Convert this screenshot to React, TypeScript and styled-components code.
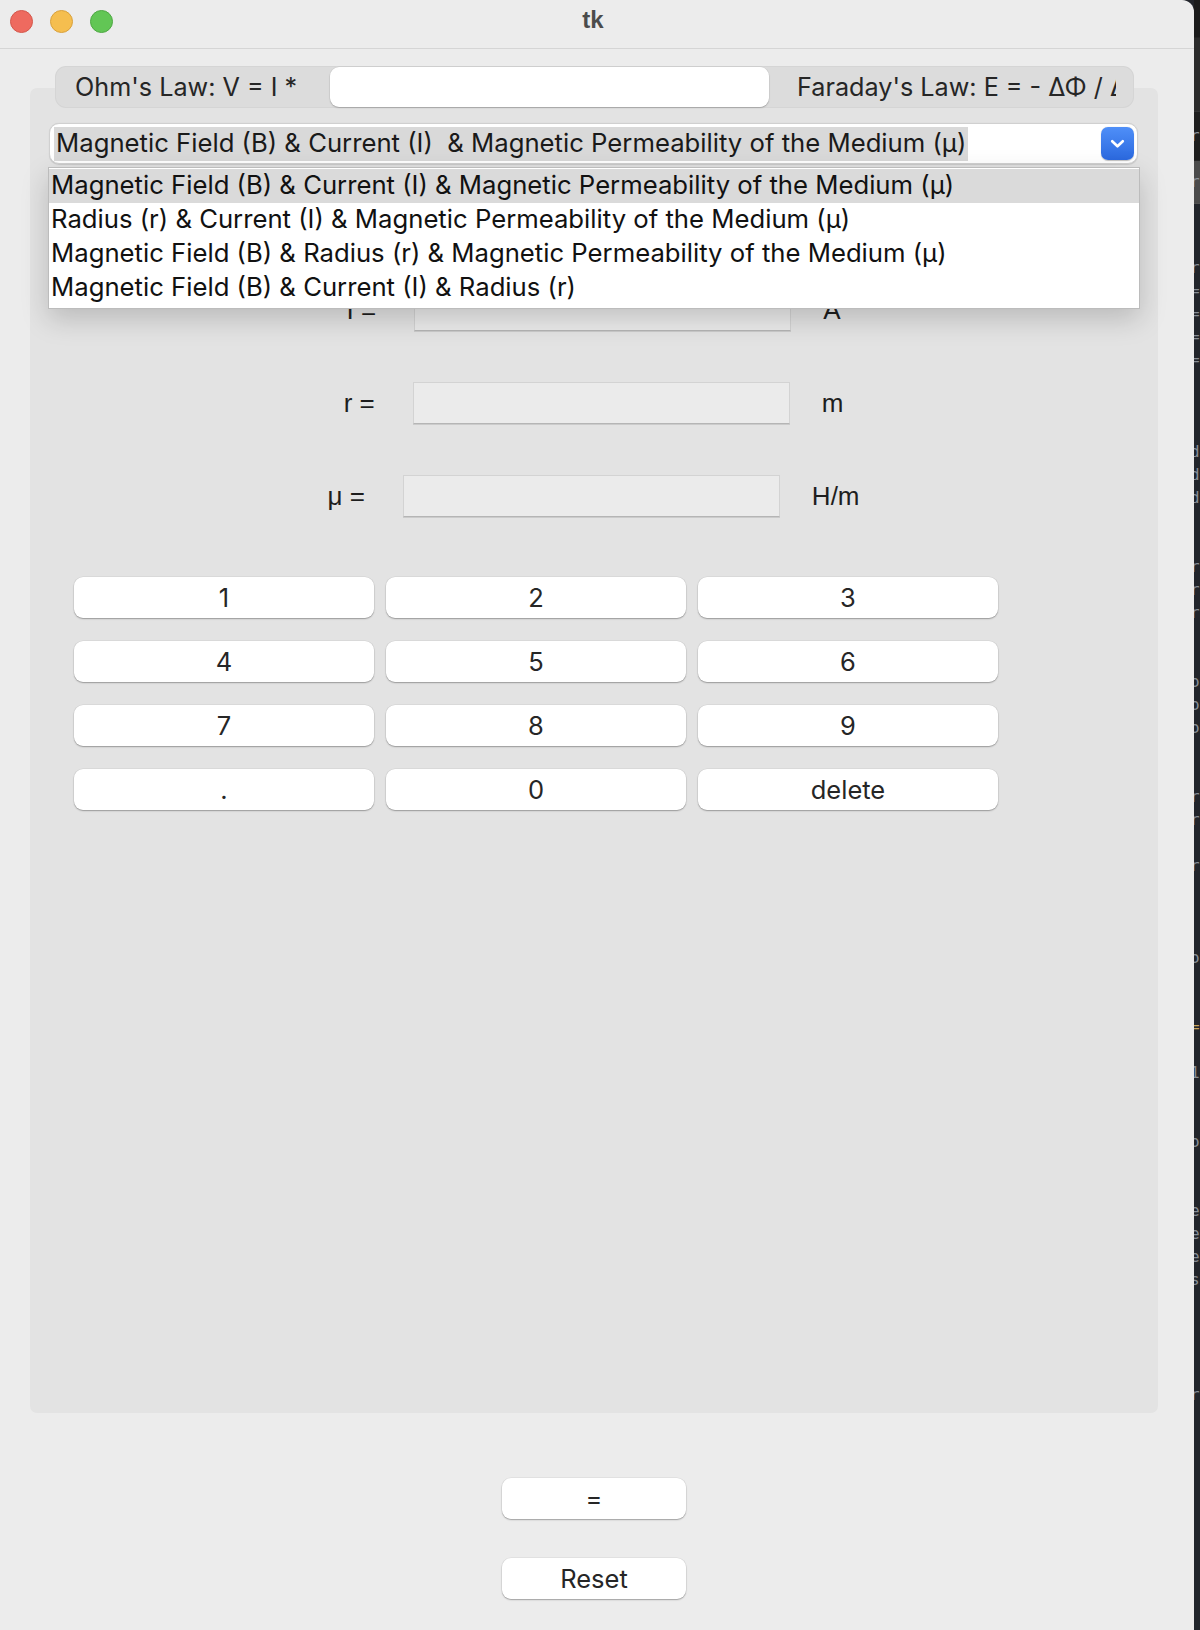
import React from "react";
import styled, { createGlobalStyle } from "styled-components";

const SF = `Inter, "Liberation Sans", Arial, sans-serif`;
const HELV = `"Liberation Sans", Arial, Helvetica, sans-serif`;
const MONO = `"DejaVu Sans Mono", "Liberation Mono", monospace`;

const GlobalStyle = createGlobalStyle`
  html, body { margin: 0; padding: 0; background: #22252b; }
  body { width: 1200px; height: 1630px; overflow: hidden; }
  *, *::before, *::after { box-sizing: border-box; }
`;

const Page = styled.div`
  display: flex;
  width: 1200px;
  height: 1630px;
`;

const Window = styled.div`
  flex: 0 0 1194px;
  height: 1630px;
  background: #ececec;
  border-top-right-radius: 12px;
  display: flex;
  flex-direction: column;
  overflow: hidden;
`;

const TitleBar = styled.div`
  height: 49px;
  border-bottom: 1px solid #d5d5d5;
  display: grid;
  grid-template-columns: 1fr auto 1fr;
  align-items: center;
  padding: 0 8px 6px 0;
`;

const Lights = styled.div`
  display: flex;
  align-items: center;
  gap: 17px;
  margin-left: 10px;
`;

const Light = styled.span<{ $c: string; $b: string }>`
  width: 23px;
  height: 23px;
  border-radius: 50%;
  background: ${(p) => p.$c};
  border: 1px solid ${(p) => p.$b};
`;

const Title = styled.div`
  font: bold 24px ${HELV};
  color: #4b4b4b;
  margin-bottom: 3px;
`;

const Body = styled.div`
  display: flex;
  flex-direction: column;
  padding: 17px 36px 0 30px;
`;

const TabBar = styled.div`
  position: relative;
  z-index: 2;
  height: 42px;
  margin: 0 24px -20px 25px;
  background: #dcdcdc;
  border-radius: 11px;
  box-shadow: inset 0 0 0 1px rgba(0, 0, 0, 0.03);
  display: flex;
  align-items: center;
  padding: 0 18px 0 0;
`;

const Tab = styled.div<{ $w?: number; $selected?: boolean; $pl?: number }>`
  ${(p) => (p.$w ? `flex: 0 0 ${p.$w}px;` : `flex: 1 1 auto; min-width: 0;`)}
  height: ${(p) => (p.$selected ? "40px" : "42px")};
  display: flex;
  align-items: center;
  padding-left: ${(p) => p.$pl ?? 0}px;
  font: 25.2px ${SF};
  color: #262626;
  white-space: nowrap;
  overflow: hidden;
  background: ${(p) => (p.$selected ? "#ffffff" : "transparent")};
  border-radius: ${(p) => (p.$selected ? "9px" : "0")};
  box-shadow: ${(p) =>
    p.$selected ? "0 1px 1.5px rgba(0,0,0,0.22), 0 0 0 0.5px rgba(0,0,0,0.06)" : "none"};
`;

const Panel = styled.div`
  height: 1325px;
  background: #e3e3e3;
  border-radius: 7px;
  padding: 35px 20px 0 19px;
  display: flex;
  flex-direction: column;
`;

const ComboWrap = styled.div`
  position: relative;
  z-index: 3;
`;

const Combo = styled.div`
  height: 41px;
  background: #ffffff;
  border: 1px solid #d0d0d0;
  border-radius: 10px;
  display: flex;
  align-items: center;
  justify-content: space-between;
  padding: 0 3px 0 4px;
  box-shadow: 0 0.5px 1px rgba(0, 0, 0, 0.12);
`;

const ComboValue = styled.span`
  height: 34px;
  line-height: 38px;
  overflow: visible;
  background: #d9d9d9;
  padding: 0 2px;
  font: 25.7px ${SF};
  color: #1a1a1a;
  white-space: pre;
`;

const ComboButton = styled.span`
  width: 33px;
  height: 33px;
  border-radius: 7px;
  background: linear-gradient(180deg, #4f8ff8 0%, #2b69df 100%);
  display: flex;
  align-items: center;
  justify-content: center;
  box-shadow: 0 0.5px 1px rgba(0, 0, 0, 0.25);
`;

const DropList = styled.div`
  position: absolute;
  top: calc(100% + 3px);
  left: -1px;
  right: -2px;
  background: #ffffff;
  border: 1px solid #bcbcbc;
  box-shadow: 0 10px 26px rgba(0, 0, 0, 0.18);
  padding: 1px 0 3px;
`;

const DropItem = styled.div<{ $active?: boolean }>`
  height: 34px;
  line-height: 40px;
  padding-left: 2px;
  font: 25.7px ${SF};
  color: #111111;
  white-space: nowrap;
  background: ${(p) => (p.$active ? "#dadada" : "transparent")};
`;

const FormRows = styled.div`
  margin-top: 125px;
  display: flex;
  flex-direction: column;
  align-items: center;
  gap: 51px;
`;

const FieldRow = styled.div`
  display: flex;
  align-items: center;
  height: 42px;
`;

const FieldLabel = styled.span`
  font: 26px ${HELV};
  color: #1e1e1e;
  margin-right: 38px;
`;

const Entry = styled.input`
  width: 377px;
  height: 42px;
  background: #ebebeb;
  border: 1px solid #d3d3d3;
  border-bottom-color: #b5b5b5;
  box-shadow: 0 1px 0 rgba(0, 0, 0, 0.1);
  outline: none;
  padding: 0 6px;
  font: 26px ${HELV};
`;

const Unit = styled.span`
  font: 26px ${HELV};
  color: #1e1e1e;
  margin-left: 32px;
`;

const Keypad = styled.div`
  margin: 60px 0 0 25px;
  display: grid;
  grid-template-columns: repeat(3, 300px);
  column-gap: 12px;
  row-gap: 23px;
`;

const KeyButton = styled.button<{ $w?: number }>`
  width: ${(p) => (p.$w ? `${p.$w}px` : "100%")};
  height: 41px;
  background: #ffffff;
  border: none;
  border-radius: 9px;
  box-shadow: 0 1px 1.5px rgba(0, 0, 0, 0.3), 0 0 0 0.5px rgba(0, 0, 0, 0.07);
  font: 25.5px ${SF};
  color: #262626;
  padding: 0;
  display: flex;
  align-items: center;
  justify-content: center;
`;

const Footer = styled.div`
  margin-top: 65px;
  display: flex;
  flex-direction: column;
  align-items: center;
  gap: 39px;
`;

const EditorStrip = styled.div`
  flex: 1 1 auto;
  height: 1630px;
  display: flex;
  flex-direction: column;
  overflow: hidden;
  background: #22252b;
`;

const StripBlock = styled.div<{ $h: number; $bg: string }>`
  flex: 0 0 ${(p) => p.$h}px;
  background: ${(p) => p.$bg};
  border-bottom: 1px solid rgba(255, 255, 255, 0.04);
  font: 16px/${(p) => p.$h}px ${MONO};
  color: #8d949c;
  white-space: pre;
  text-indent: -4px;
`;

const CodeLines = styled.div`
  font: 16px/23px ${MONO};
  color: #868d96;
  white-space: pre;
  text-indent: -4px;
  padding-top: 6px;
`;

const CodeLine = styled.div<{ $accent?: boolean }>`
  height: 23px;
  color: ${(p) => (p.$accent ? "#c9a55b" : "inherit")};
`;

const Chevron = () => (
  <svg width="33" height="33" viewBox="0 0 33 33" aria-hidden="true">
    <path
      d="M11.2 14.2 L16.5 19.3 L21.8 14.2"
      fill="none"
      stroke="#ffffff"
      strokeWidth="2.6"
      strokeLinecap="round"
      strokeLinejoin="round"
    />
  </svg>
);

const options = [
  "Magnetic Field (B) & Current (I) & Magnetic Permeability of the Medium (μ)",
  "Radius (r) & Current (I) & Magnetic Permeability of the Medium (μ)",
  "Magnetic Field (B) & Radius (r) & Magnetic Permeability of the Medium (μ)",
  "Magnetic Field (B) & Current (I) & Radius (r)",
];

const fields = [
  { label: "I =", unit: "A" },
  { label: "r =", unit: "m" },
  { label: "μ =", unit: "H/m" },
];

const keys = ["1", "2", "3", "4", "5", "6", "7", "8", "9", ".", "0", "delete"];

const code: { t: string; accent?: boolean }[] = [
  { t: "" }, { t: "" }, { t: "r" }, { t: "=" }, { t: "=" }, { t: "=" }, { t: "=" },
  { t: "" }, { t: "" }, { t: "" }, { t: "d" }, { t: "d" }, { t: "d" }, { t: "" },
  { t: "" }, { t: "r" }, { t: "r" }, { t: "r" }, { t: "" }, { t: "" }, { t: "o" },
  { t: "o" }, { t: "o" }, { t: "" }, { t: "" }, { t: "r" }, { t: "r" }, { t: "" },
  { t: "r" }, { t: "" }, { t: "" }, { t: "" }, { t: "o" }, { t: "" }, { t: "" },
  { t: "=", accent: true }, { t: "" }, { t: "1" }, { t: "" }, { t: "" }, { t: "o" },
  { t: "" }, { t: "" }, { t: "e" }, { t: "e" }, { t: "e" }, { t: "s" }, { t: "" },
  { t: "" }, { t: "" }, { t: "" }, { t: "r" }, { t: "" }, { t: "" }, { t: "" },
];

export default function App() {
  return (
    <>
      <GlobalStyle />
      <Page>
        <Window>
          <TitleBar>
            <Lights>
              <Light $c="#ee6a5f" $b="#d4574b" />
              <Light $c="#f5be4f" $b="#d9a13c" />
              <Light $c="#62c655" $b="#4ea843" />
            </Lights>
            <Title>tk</Title>
            <div />
          </TitleBar>
          <Body>
            <TabBar>
              <Tab $w={275} $pl={20}>
                Ohm's Law: V = I *
              </Tab>
              <Tab $w={439} $selected />
              <Tab $pl={28}>Faraday's Law: E = - ΔΦ / Δt</Tab>
            </TabBar>
            <Panel>
              <ComboWrap>
                <Combo>
                  <ComboValue>
                    {"Magnetic Field (B) & Current (I)  & Magnetic Permeability of the Medium (μ)"}
                  </ComboValue>
                  <ComboButton>
                    <Chevron />
                  </ComboButton>
                </Combo>
                <DropList>
                  {options.map((o, i) => (
                    <DropItem key={o} $active={i === 0}>
                      {o}
                    </DropItem>
                  ))}
                </DropList>
              </ComboWrap>
              <FormRows>
                {fields.map((f) => (
                  <FieldRow key={f.label}>
                    <FieldLabel>{f.label}</FieldLabel>
                    <Entry readOnly value="" />
                    <Unit>{f.unit}</Unit>
                  </FieldRow>
                ))}
              </FormRows>
              <Keypad>
                {keys.map((k) => (
                  <KeyButton key={k}>{k}</KeyButton>
                ))}
              </Keypad>
            </Panel>
            <Footer>
              <KeyButton $w={184}>=</KeyButton>
              <KeyButton $w={184}>Reset</KeyButton>
            </Footer>
          </Body>
        </Window>
        <EditorStrip>
          <StripBlock $h={37} $bg="#1b1b1b">{" "}</StripBlock>
          <StripBlock $h={73} $bg="#2b2b2b">{" "}</StripBlock>
          <StripBlock $h={48} $bg="#1e1e1e">r</StripBlock>
          <StripBlock $h={42} $bg="#4b4b4b">r</StripBlock>
          <CodeLines>
            {code.map((c, i) => (
              <CodeLine key={i} $accent={c.accent}>
                {c.t || " "}
              </CodeLine>
            ))}
          </CodeLines>
        </EditorStrip>
      </Page>
    </>
  );
}
